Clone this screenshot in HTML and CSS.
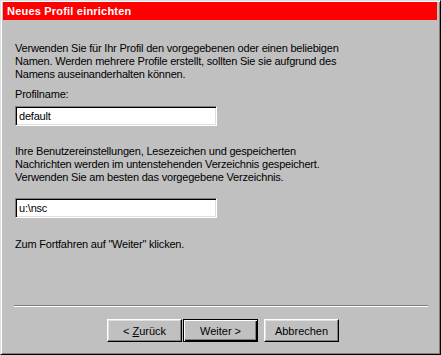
FILE: index.html
```html
<!DOCTYPE html>
<html lang="de">
<head>
    <meta charset="UTF-8">
    <title>Neues Profil einrichten</title>
    <link rel="stylesheet" href="styles.css">
</head>
<body>
    <div class="window">
        <div class="titlebar">Neues Profil einrichten</div>
        <div class="content">
            <p class="intro">Verwenden Sie für Ihr Profil den vorgegebenen oder einen beliebigen<br>Namen. Werden mehrere Profile erstellt, sollten Sie sie aufgrund des<br>Namens auseinanderhalten können.</p>
            <label class="field-label" for="profile-name">Profilname:</label>
            <input class="field" type="text" id="profile-name" value="default">
            <p class="info">Ihre Benutzereinstellungen, Lesezeichen und gespeicherten<br>Nachrichten werden im untenstehenden Verzeichnis gespeichert.<br>Verwenden Sie am besten das vorgegebene Verzeichnis.</p>
            <input class="field dir" type="text" id="profile-dir" value="u:\nsc">
            <p class="hint">Zum Fortfahren auf "Weiter" klicken.</p>
        </div>
        <div class="separator"></div>
        <div class="buttons">
            <button class="btn">&lt; <u>Z</u>urück</button>
            <button class="btn default">Weiter &gt;</button>
            <button class="btn cancel">Abbrechen</button>
        </div>
    </div>
</body>
</html>
```

FILE: styles.css
```css
body {
    margin: 0;
    padding: 0;
    background-color: #c0c0c0;
    font-family: "Liberation Sans", Arial, sans-serif;
    font-size: 11px;
    color: #000;
}
.window {
    width: 441px;
    height: 355px;
    box-sizing: border-box;
    background: #c0c0c0;
    border: 1px solid;
    border-color: #dfdfdf #000 #000 #dfdfdf;
    box-shadow: inset 1px 1px #fff, inset -1px -1px #808080;
    padding: 1px 3px 0 1px;
    display: flex;
    flex-direction: column;
}
.titlebar {
    height: 18px;
    line-height: 18px;
    background: #ff0000;
    color: #fff;
    font-weight: bold;
    letter-spacing: 0.2px;
    padding-left: 4px;
    margin-left: 1px;
}
.content {
    padding: 22px 0 0 13px;
    letter-spacing: -0.2px;
}
.content p {
    margin: 0;
    line-height: 13px;
}
.field-label {
    display: block;
    margin-top: 7px;
    line-height: 13px;
}
.field {
    display: block;
    width: 202px;
    height: 20px;
    box-sizing: border-box;
    margin-top: 5px;
    padding: 0 3px;
    border: 1px solid;
    border-color: #808080 #fff #fff #808080;
    box-shadow: inset 1px 1px #000, inset -1px -1px #dfdfdf;
    background: #fff;
    font-family: inherit;
    font-size: 11px;
    letter-spacing: -0.2px;
    color: #000;
    outline: none;
}
.field.dir {
    margin-top: 14px;
}
.info {
    margin-top: 19px !important;
}
.hint {
    margin-top: 20px !important;
}
.separator {
    margin: auto 9px 0 12px;
    border-top: 1px solid #808080;
    border-bottom: 1px solid #fff;
}
.buttons {
    display: flex;
    padding: 12px 0 0 105px;
    height: 35px;
}
.btn {
    width: 75px;
    height: 23px;
    box-sizing: border-box;
    background: #c0c0c0;
    border: 1px solid;
    border-color: #fff #000 #000 #fff;
    box-shadow: inset -1px -1px #808080, inset 1px 1px #dfdfdf;
    font-family: inherit;
    font-size: 11px;
    color: #000;
    padding: 0;
}
.btn.default {
    margin-left: 1px;
    border: 1px solid #000;
    box-shadow: inset 1px 1px #fff, inset -1px -1px #000, inset -2px -2px #808080;
}
.btn.cancel {
    margin-left: 6px;
}
```
